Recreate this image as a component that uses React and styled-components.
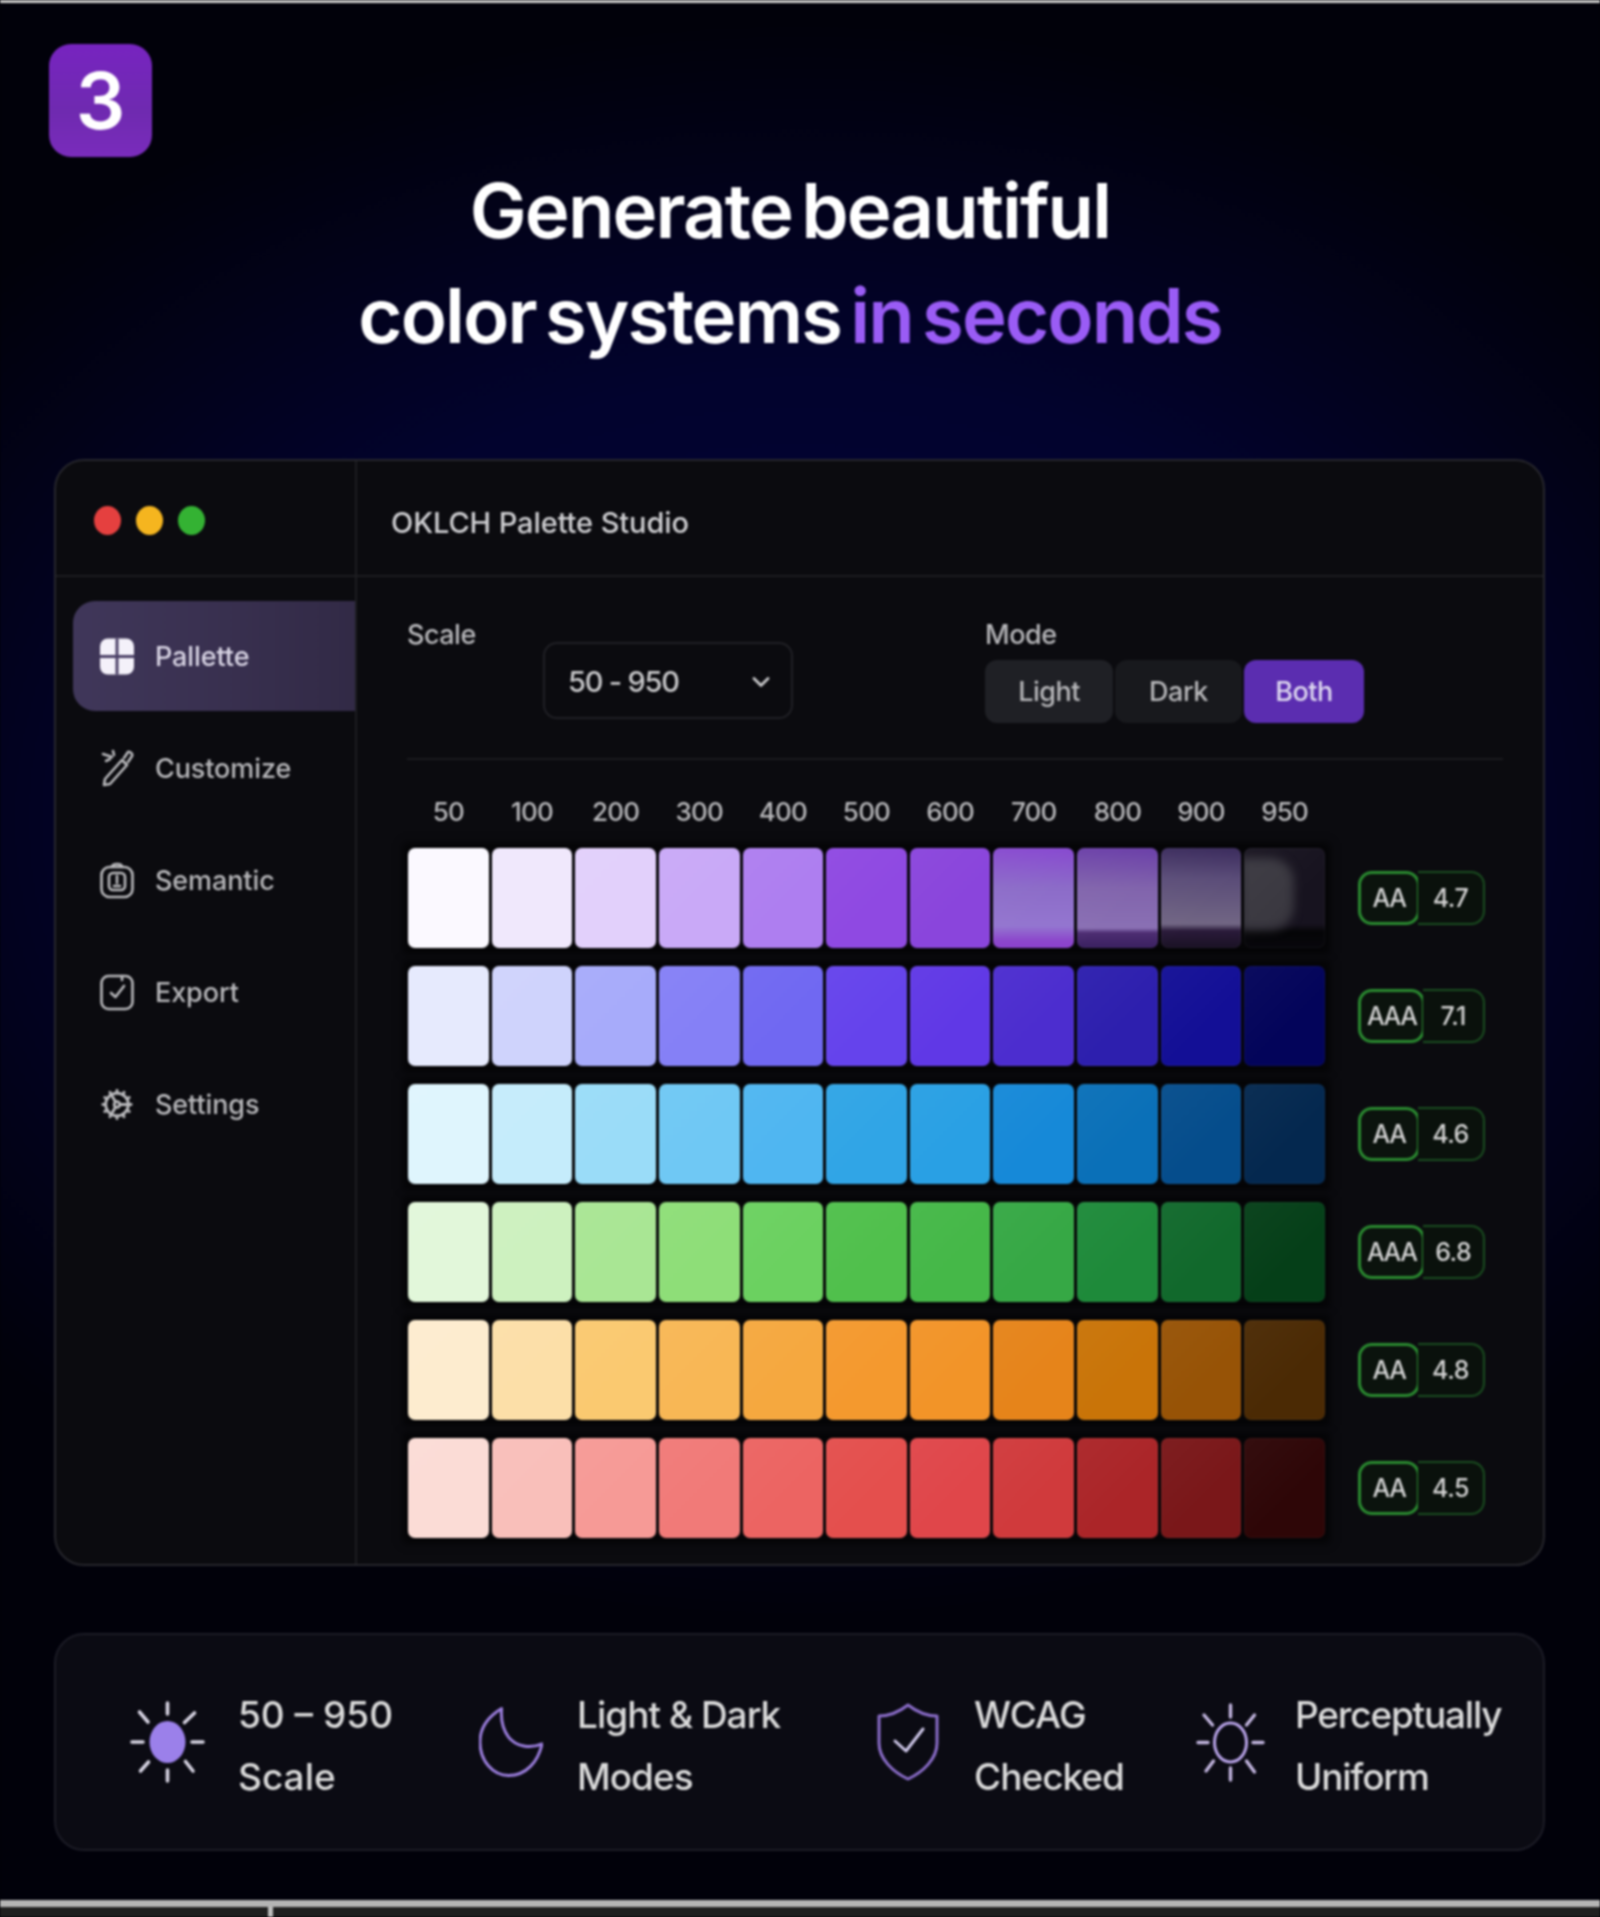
import React from "react";
import styled, { createGlobalStyle } from "styled-components";
import { ChevronDown, Cog } from "lucide-react";

const GlobalStyle = createGlobalStyle`
  html, body {
    margin: 0;
    padding: 0;
    background: #010106;
  }
  * {
    box-sizing: border-box;
  }
`;

const STEPS = ["50", "100", "200", "300", "400", "500", "600", "700", "800", "900", "950"];

const PALETTES = [
  {
    level: "AA",
    ratio: "4.7",
    colors: [
      "#fbf9ff", "#f0e8fc", "#e2d0fb", "#c9a9f7", "#ae7ef0", "#8f49e2", "#8a45dc",
      "linear-gradient(180deg, #8748d0 0%, #8c6cc8 40%, #9476d0 78%, #8d48cc 92%, #8a40cc 100%)",
      "linear-gradient(180deg, #6a3ea8 0%, #8164ac 40%, #8a70b4 80%, #4d2d72 85%, #3a2060 100%)",
      "linear-gradient(180deg, #3a2a5c 0%, #5a4c78 30%, #716684 76%, #2a1a3a 83%, #1a1224 100%)",
      "linear-gradient(180deg, #17131f 0%, #17131f 76%, #050507 84%, #08070c 100%)",
    ],
    ghost: 10,
  },
  {
    level: "AAA",
    ratio: "7.1",
    colors: ["#e6eafd", "#cfd3fc", "#a7abfa", "#8580f6", "#7068f2", "#6543ec", "#6038e6", "#4c2dcf", "#2d1fae", "#130f96", "#03045a"],
  },
  {
    level: "AA",
    ratio: "4.6",
    colors: ["#dff5fd", "#c5ecfb", "#9adcf8", "#6fc8f4", "#4fb6f1", "#30a5e6", "#29a0e4", "#1689d8", "#0a70b8", "#054d8c", "#04284f"],
  },
  {
    level: "AAA",
    ratio: "6.8",
    colors: ["#e2f7da", "#cdf1bf", "#a9e694", "#8ede78", "#6bd160", "#50c04c", "#45b848", "#36a845", "#1e8a3a", "#11692c", "#053f18"],
  },
  {
    level: "AA",
    ratio: "4.8",
    colors: ["#fdeccf", "#fcdfa8", "#fac970", "#f8b755", "#f5a83f", "#f4992e", "#f29428", "#e6841a", "#c97408", "#975306", "#4b2a04"],
  },
  {
    level: "AA",
    ratio: "4.5",
    colors: ["#fbdcd6", "#f9bfba", "#f69a96", "#f17a78", "#ec6462", "#e44f4d", "#e0464a", "#d03a3c", "#ab2528", "#7a1719", "#2e0607"],
  },
];

const PaletteIcon = () => (
  <svg width="35" height="37" viewBox="0 0 35 37">
    <rect x="0" y="0" width="35" height="37" rx="8" fill="#f4f1fa" />
    <path d="M0 18.5 H35 M17.5 0 V37" stroke="#4a3f66" strokeWidth="3" />
  </svg>
);

const DropperIcon = () => (
  <svg width="34" height="38" viewBox="0 0 34 38" fill="none" stroke="#b9b9bc" strokeWidth="2.6" strokeLinecap="round" strokeLinejoin="round">
    <path d="M5 30 L22 11 L27 16 L10 35 L4 36 Z" />
    <path d="M24 9 L28 3 C30 2 33 5 32 7 L28 13" />
    <path d="M3 5 L12 8 M6 12 L10 10 M13 2 L14 6" />
  </svg>
);

const TagIcon = () => (
  <svg width="34" height="38" viewBox="0 0 34 38" fill="none" stroke="#b9b9bc" strokeWidth="2.6" strokeLinecap="round" strokeLinejoin="round">
    <rect x="1.5" y="6" width="31" height="30" rx="8" />
    <path d="M12 6 C12 2 22 2 22 6" />
    <rect x="9" y="12" width="16" height="17" rx="4" />
    <path d="M17 15 V22 M14 25 H20" />
  </svg>
);

const ExportIcon = () => (
  <svg width="34" height="38" viewBox="0 0 34 38" fill="none" stroke="#b9b9bc" strokeWidth="2.6" strokeLinecap="round" strokeLinejoin="round">
    <rect x="1.5" y="3" width="31" height="33" rx="7" />
    <path d="M11 20 L15.5 24 L24 13" />
    <path d="M22 3 V7" />
  </svg>
);

const FilledSun = () => (
  <svg width="76" height="82" viewBox="0 0 76 82" fill="none" stroke="#d6d3e2" strokeLinecap="round">
    <ellipse cx="38.5" cy="41" rx="18" ry="21" fill="#9b80ea" stroke="none" />
    <g strokeWidth="3.6">
      <path d="M38.5 2 V13 M38.5 69 V80 M3 41 H14 M63 41 H74" />
      <path d="M10.5 11 L19 21 M65.5 12 L55.5 21.5 M11.5 70 L19.5 61 M64 70 L56.5 60.5" />
    </g>
  </svg>
);

const Moon = () => (
  <svg width="65" height="71" viewBox="0 0 65 71" fill="none" stroke="#9a7ddb" strokeWidth="3" strokeLinejoin="round">
    <path d="M23 1 C8 10 1 22 1 35 C1 54 14 69 30 69 C48 69 60 55 64 37 C52 42 38 40 30 30 C24 22 22 12 23 1 Z" />
  </svg>
);

const Shield = () => (
  <svg width="62" height="78" viewBox="0 0 62 78" fill="none" strokeLinecap="round" strokeLinejoin="round">
    <path d="M31 2 C40 9 50 13 60 13 V40 C60 56 46 69 31 76 C16 69 2 56 2 40 V13 C12 13 22 9 31 2 Z" stroke="#8a6cc8" strokeWidth="3" />
    <path d="M18 38 L29 48 L46 26" stroke="#cfc8ea" strokeWidth="3" />
  </svg>
);

const OutlineSun = () => (
  <svg width="69" height="79" viewBox="0 0 69 79" fill="none" stroke="#b8a3e8" strokeLinecap="round">
    <ellipse cx="34.5" cy="39.5" rx="16" ry="19.5" strokeWidth="3" />
    <g strokeWidth="3.4" stroke="#c3b6e0">
      <path d="M34.5 2 V14 M34.5 65 V77 M2 39.5 H12 M57 39.5 H67" />
      <path d="M8 12 L16.5 22 M58.5 12 L50.5 22 M10 68 L17.5 58 M58.5 69 L50.5 58" />
    </g>
  </svg>
);

const NAV = [
  { label: "Pallette", icon: <PaletteIcon />, active: true },
  { label: "Customize", icon: <DropperIcon /> },
  { label: "Semantic", icon: <TagIcon /> },
  { label: "Export", icon: <ExportIcon /> },
  { label: "Settings", icon: <Cog size={37} color="#b9b9bc" strokeWidth={2} /> },
];

const FEATURES = [
  { icon: <FilledSun />, width: 76, gap: 33, tracking: 0, lines: ["50 – 950", "Scale"] },
  { icon: <Moon />, width: 64, gap: 34, tracking: -1, lines: ["Light & Dark", "Modes"] },
  { icon: <Shield />, width: 62, gap: 35, tracking: -1, lines: ["WCAG", "Checked"] },
  { icon: <OutlineSun />, width: 69, gap: 30, tracking: -1.2, lines: ["Perceptually", "Uniform"] },
];

const App = () => {
  return (
    <Page>
      <GlobalStyle />
      <TopLine />
      <StepBadge>3</StepBadge>
      <Heading>
        Generate beautiful
        <br />
        color systems <Accent>in seconds</Accent>
      </Heading>
      <Window>
        <TitleBar>
          <DotsCell>
            <Dot $color="#e5403f" />
            <Dot $color="#f5b51f" />
            <Dot $color="#34b233" />
          </DotsCell>
          <AppTitle>OKLCH Palette Studio</AppTitle>
        </TitleBar>
        <Body>
          <Sidebar>
            {NAV.map((item) => (
              <NavItem key={item.label} $active={item.active}>
                <NavIcon>{item.icon}</NavIcon>
                {item.label}
              </NavItem>
            ))}
          </Sidebar>
          <Main>
            <Controls>
              <ScaleLabel>Scale</ScaleLabel>
              <Select>
                50 - 950
                <ChevronDown size={28} color="#c8c8ca" strokeWidth={2.4} />
              </Select>
              <ModeGroup>
                <FieldLabel>Mode</FieldLabel>
                <Segments>
                  <Segment $width={128} $bg="#1f2025">Light</Segment>
                  <Segment $width={127} $bg="#18191d">Dark</Segment>
                  <Segment $width={120} $bg="#5b2db0" $on>Both</Segment>
                </Segments>
              </ModeGroup>
            </Controls>
            <Steps>
              {STEPS.map((step) => (
                <Step key={step}>{step}</Step>
              ))}
            </Steps>
            <Rows>
              {PALETTES.map((palette) => (
                <Row key={palette.colors[0]}>
                  <Swatches>
                    {palette.colors.map((color, i) => (
                      <Swatch key={i} style={{ background: color }}>
                        {palette.ghost && i === palette.ghost && <Ghost />}
                      </Swatch>
                    ))}
                  </Swatches>
                  <Contrast>
                    <Level>{palette.level}</Level>
                    <Ratio>{palette.ratio}</Ratio>
                  </Contrast>
                </Row>
              ))}
            </Rows>
          </Main>
        </Body>
      </Window>
      <Features>
        {FEATURES.map((feature) => (
          <Feature key={feature.lines[0]} $gap={feature.gap}>
            <FeatureIcon $width={feature.width}>{feature.icon}</FeatureIcon>
            <FeatureText $tracking={feature.tracking}>
              {feature.lines[0]}
              <br />
              {feature.lines[1]}
            </FeatureText>
          </Feature>
        ))}
      </Features>
      <BottomBar>
        <Tick />
      </BottomBar>
    </Page>
  );
};

const Page = styled.main`
  width: 1600px;
  height: 1917px;
  display: flex;
  flex-direction: column;
  overflow: hidden;
  font-family: Inter, "Liberation Sans", sans-serif;
  background: radial-gradient(ellipse 1100px 800px at 800px 820px, #03043a 0%, #02032e 55%, #020218 82%, #01010a 100%);
  filter: blur(0.9px);
`;

const TopLine = styled.div`
  height: 3px;
  flex: none;
  background: #cfcfcf;
`;

const StepBadge = styled.div`
  width: 103px;
  height: 113px;
  flex: none;
  margin: 41px 0 0 49px;
  display: flex;
  align-items: center;
  justify-content: center;
  border-radius: 22px;
  background: linear-gradient(180deg, #7724c0 0%, #6f2ab0 60%, #7a2cbc 100%);
  color: #fff;
  font-size: 78px;
  font-weight: 600;
`;

const Heading = styled.h1`
  margin: 1px 20px 0 0;
  flex: none;
  height: 211px;
  text-align: center;
  font-size: 76px;
  line-height: 105px;
  font-weight: 600;
  letter-spacing: -1.9px;
  word-spacing: -8px;
  color: #fff;
`;

const Accent = styled.span`
  color: #9a5cf5;
`;

const Window = styled.section`
  width: 1491px;
  height: 1107px;
  flex: none;
  margin: 90px 0 0 54px;
  display: flex;
  flex-direction: column;
  border: 2px solid #26262c;
  border-radius: 30px;
  background: #0b0b0f;
  overflow: hidden;
`;

const TitleBar = styled.header`
  height: 116px;
  flex: none;
  display: flex;
  border-bottom: 2px solid #1d1d21;
`;

const DotsCell = styled.div`
  width: 301px;
  flex: none;
  display: flex;
  align-items: center;
  gap: 15px;
  padding: 4px 0 0 38px;
  border-right: 2px solid #1d1d21;
`;

const Dot = styled.span`
  width: 27px;
  height: 29px;
  border-radius: 50%;
  background: ${(p) => p.$color};
`;

const AppTitle = styled.div`
  display: flex;
  align-items: center;
  padding: 8px 0 0 34px;
  font-size: 29px;
  font-weight: 500;
  letter-spacing: -0.1px;
  color: #cfcfd2;
`;

const Body = styled.div`
  flex: 1;
  display: flex;
  min-height: 0;
`;

const Sidebar = styled.nav`
  width: 301px;
  flex: none;
  display: flex;
  flex-direction: column;
  gap: 2px;
  padding: 24px 0 0 17px;
  border-right: 2px solid #1d1d21;
`;

const NavItem = styled.div`
  height: 110px;
  display: flex;
  align-items: center;
  gap: 21px;
  padding-left: 27px;
  border-radius: 22px 0 0 22px;
  background: ${(p) => (p.$active ? "linear-gradient(90deg, #40375a, #322a46)" : "transparent")};
  font-size: 27px;
  font-weight: 500;
  letter-spacing: -0.1px;
  color: ${(p) => (p.$active ? "#d8d4e4" : "#b7b7ba")};
`;

const NavIcon = styled.span`
  width: 34px;
  display: flex;
  justify-content: center;
`;

const Main = styled.div`
  flex: 1;
  padding: 41px 0 0 50px;
`;

const Controls = styled.div`
  width: 1096px;
  height: 142px;
  display: flex;
  align-items: flex-start;
  border-bottom: 2px solid #1a1a1e;
`;

const FieldLabel = styled.div`
  height: 34px;
  line-height: 34px;
  font-size: 27px;
  font-weight: 500;
  letter-spacing: -0.5px;
  color: #b7b7ba;
`;

const ScaleLabel = styled(FieldLabel)`
  width: 136px;
`;

const Select = styled.div`
  width: 250px;
  height: 77px;
  margin-top: 24px;
  display: flex;
  align-items: center;
  justify-content: space-between;
  padding: 2px 16px 0 23px;
  border: 2px solid #202025;
  border-radius: 14px;
  font-size: 29px;
  font-weight: 500;
  letter-spacing: -1.2px;
  color: #c8c8ca;
`;

const ModeGroup = styled.div`
  margin-left: 192px;
`;

const Segments = styled.div`
  display: flex;
  gap: 2px;
  margin-top: 8px;
`;

const Segment = styled.div`
  width: ${(p) => p.$width}px;
  height: 63px;
  display: flex;
  align-items: center;
  justify-content: center;
  border-radius: 12px;
  background: ${(p) => p.$bg};
  font-size: 27px;
  font-weight: 500;
  letter-spacing: -0.5px;
  color: ${(p) => (p.$on ? "#ded8f0" : "#b7b7ba")};
`;

const Steps = styled.div`
  width: 917px;
  margin: 37px 0 21px 1px;
  display: grid;
  grid-template-columns: repeat(11, 1fr);
  gap: 3px;
`;

const Step = styled.div`
  height: 30px;
  line-height: 30px;
  text-align: center;
  font-size: 26px;
  font-weight: 500;
  letter-spacing: -0.8px;
  color: #b7b7ba;
`;

const Rows = styled.div`
  display: flex;
  flex-direction: column;
  gap: 18px;
  padding-left: 1px;
`;

const Row = styled.div`
  height: 100px;
  display: flex;
  align-items: center;
`;

const Swatches = styled.div`
  width: 917px;
  height: 100%;
  flex: none;
  display: grid;
  grid-template-columns: repeat(11, 1fr);
  gap: 3px;
  box-shadow: 0 0 8px 5px rgba(0, 0, 0, 0.65);
  background: rgba(0, 0, 0, 0.5);
`;

const Swatch = styled.div`
  position: relative;
  border-radius: 7px;
  overflow: hidden;
  box-shadow: inset 0 0 0 1px rgba(255, 255, 255, 0.04);

  &::after {
    content: "";
    position: absolute;
    inset: 0;
    background: linear-gradient(135deg, rgba(255, 255, 255, 0.03), rgba(255, 255, 255, 0) 60%);
  }
`;

const Ghost = styled.div`
  position: absolute;
  top: 10px;
  left: -4px;
  width: 54px;
  height: 72px;
  border-radius: 0 24px 24px 0;
  background: #3a3840;
  filter: blur(5px);
`;

const Contrast = styled.div`
  width: 127px;
  height: 54px;
  margin-left: 33px;
  display: flex;
  font-size: 25px;
  font-weight: 500;
  color: #d2d2d2;
`;

const Level = styled.div`
  min-width: 62px;
  padding: 0 6px;
  display: flex;
  align-items: center;
  justify-content: center;
  border: 3px solid #2a8a30;
  border-radius: 14px;
  background: #0b130d;
  letter-spacing: -1.5px;
`;

const Ratio = styled.div`
  flex: 1;
  margin-left: -2px;
  display: flex;
  align-items: center;
  justify-content: center;
  border: 2px solid #1a4d20;
  border-left: 0;
  border-radius: 0 14px 14px 0;
  background: #0a110c;
  letter-spacing: -0.5px;
`;

const Features = styled.section`
  width: 1491px;
  height: 218px;
  flex: none;
  margin: 67px 0 0 54px;
  display: grid;
  grid-template-columns: 350px 398px 319px 1fr;
  align-items: center;
  padding-left: 73px;
  border: 2px solid #1c1c26;
  border-radius: 30px;
  background: #0b0b13;
`;

const Feature = styled.div`
  display: flex;
  align-items: center;
  gap: ${(p) => p.$gap}px;
`;

const FeatureIcon = styled.span`
  width: ${(p) => p.$width}px;
  flex: none;
  display: flex;
  justify-content: center;
`;

const FeatureText = styled.div`
  padding-top: 7px;
  font-size: 37px;
  line-height: 62px;
  font-weight: 500;
  letter-spacing: ${(p) => p.$tracking}px;
  color: #dadada;
  white-space: nowrap;
`;

const BottomBar = styled.footer`
  height: 17px;
  flex: none;
  margin-top: 49px;
  padding-left: 268px;
  border-top: 7px solid #b4b4b4;
  background: #1f1f1f;
`;

const Tick = styled.div`
  width: 5px;
  height: 100%;
  background: #bdbdbd;
`;

export default App;
